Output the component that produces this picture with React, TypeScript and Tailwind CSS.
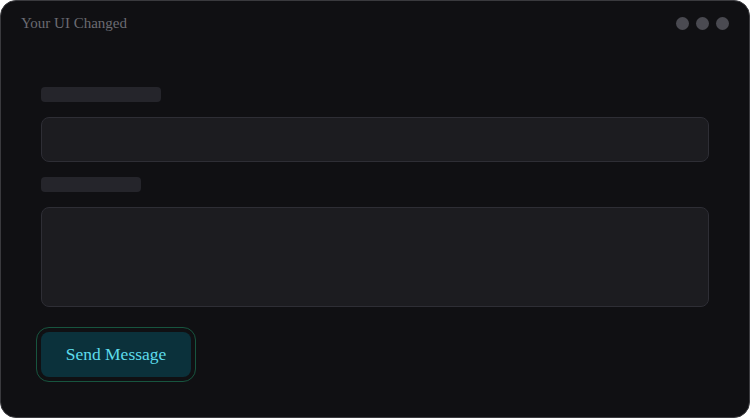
export default function App() {
  return (
    <div className="h-[418px] w-[750px] bg-white">
      <div className="flex h-full w-full flex-col overflow-hidden rounded-2xl border border-[#3a3a3e] bg-[#101013] font-['Liberation_Serif',serif]">
        <div className="flex items-center justify-between px-5 pt-4">
          <span className="text-[15px] leading-[13px] text-[#6b6b72]">Your UI Changed</span>
          <div className="flex gap-[7px]">
            <span className="h-[13px] w-[13px] rounded-full bg-[#4a4a51]" />
            <span className="h-[13px] w-[13px] rounded-full bg-[#4a4a51]" />
            <span className="h-[13px] w-[13px] rounded-full bg-[#4a4a51]" />
          </div>
        </div>

        <form className="flex flex-col px-10 pt-[57px]">
          <div className="h-[15px] w-[120px] rounded bg-[#25252b]" />
          <div className="mt-[15px] h-[45px] rounded-lg border border-[#2e2e35] bg-[#1c1c20]" />
          <div className="mt-[15px] h-[15px] w-[100px] rounded bg-[#25252b]" />
          <div className="mt-[15px] h-[100px] rounded-lg border border-[#2e2e35] bg-[#1c1c20]" />
          <div className="mt-[25px]">
            <button
              type="button"
              className="h-[45px] w-[150px] rounded-lg bg-[#0b313b] text-[17.5px] text-[#5ddcec] outline outline-1 outline-offset-4 outline-[#17553f]"
            >
              Send Message
            </button>
          </div>
        </form>
      </div>
    </div>
  );
}
